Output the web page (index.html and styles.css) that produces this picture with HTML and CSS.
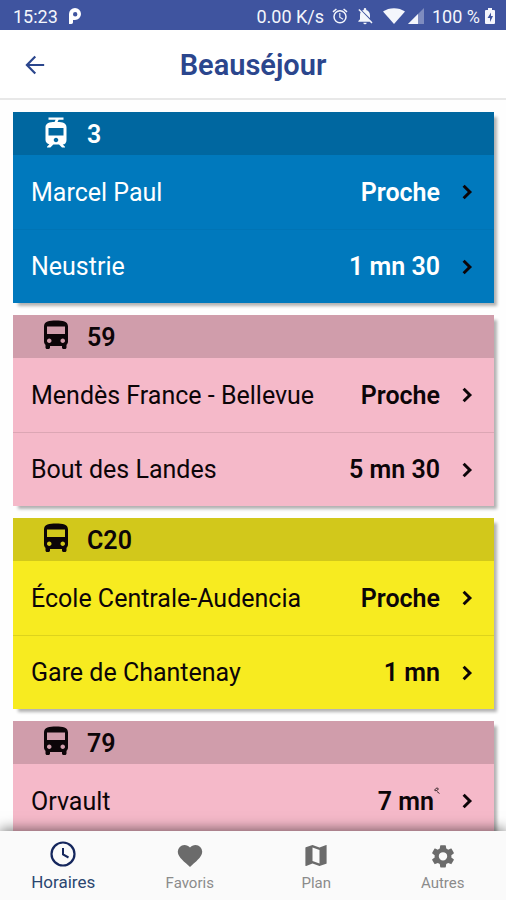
FILE: index.html
```html
<!DOCTYPE html>
<html lang="fr">
<head>
<meta charset="utf-8">
<meta name="viewport" content="width=device-width, initial-scale=1">
<title>Beauséjour</title>
<link rel="stylesheet" href="styles.css">
</head>
<body>
<svg class="defs" aria-hidden="true">
  <symbol id="bus" viewBox="0 0 24 24"><path fill-rule="evenodd" d="M4 16c0 .88.39 1.67 1 2.22V20c0 .55.45 1 1 1h1c.55 0 1-.45 1-1v-1h8v1c0 .55.45 1 1 1h1c.55 0 1-.45 1-1v-1.78c.61-.55 1-1.34 1-2.22V6c0-3.5-3.58-4-8-4s-8 .5-8 4v10zm3.500 1c-.83 0-1.500-.67-1.500-1.500S6.670 14 7.500 14s1.500.67 1.500 1.500S8.330 17 7.500 17zm9 0c-.83 0-1.500-.67-1.500-1.500s.67-1.500 1.500-1.500 1.500.67 1.500 1.500-.67 1.500-1.500 1.500zM18 11H6V6h12v5z"/></symbol>
  <symbol id="tram" viewBox="0 0 24 24"><path fill-rule="evenodd" d="M19 16.940V8.500c0-2.790-2.610-3.400-6.010-3.490L13.750 3.500H17V2H7v1.500h4.750l-.76 1.520C7.860 5.110 5 5.730 5 8.500v8.440c0 1.450 1.190 2.660 2.590 2.970L6 21.500v.5h2.230l2-2H14l2 2h2v-.5L16.500 20h-.08c1.690 0 2.580-1.370 2.580-3.060zM12 18.500c-.83 0-1.500-.67-1.500-1.500s.67-1.500 1.500-1.500 1.500.67 1.500 1.500-.67 1.500-1.500 1.500zM17 14H7V9h10v5z"/></symbol>
  <symbol id="chevron" viewBox="0 0 24 24"><path d="M8.200 16.500 12.700 12 8.200 7.500 10 5.700l6.300 6.300-6.300 6.300z"/></symbol>
</svg>
<div class="app">
  <div class="status">
    <span class="status-time">15:23</span>
    <svg class="status-p" viewBox="0 0 14 18"><path fill="#fff" fill-rule="evenodd" d="M1 17V7a6 6 0 1 1 6 6H5v2.500A2 2 0 0 1 3 17zM7.200 5a2.200 2.200 0 1 0 0 4.400 2.200 2.200 0 0 0 0-4.400z"/></svg>
    <span class="status-rate">0.00 K/s</span>
    <svg class="status-icon" viewBox="0 0 24 24"><path d="m22 5.720-4.600-3.860-1.290 1.530 4.600 3.860L22 5.720zM7.880 3.390 6.600 1.860 2 5.710l1.290 1.530 4.590-3.850zM12.500 8H11v6l4.750 2.850.75-1.230-4-2.370V8zM12 4a9 9 0 1 0 0 18 9 9 0 0 0 0-18zm0 16a7 7 0 1 1 0-14 7 7 0 0 1 0 14z"/></svg>
    <svg class="status-icon status-bell" viewBox="0 0 24 24"><path d="M20 18.690 7.840 6.140 5.270 3.490 4 4.760l2.800 2.800v.01c-.52.99-.8 2.160-.8 3.430v5l-2 2v1h13.730l2 2L21 19.720l-1-1.030zM12 22a2 2 0 0 0 2-2h-4a2 2 0 0 0 2 2zm6-7.320V11c0-3.080-1.640-5.640-4.500-6.320V4a1.500 1.500 0 0 0-3 0v.68c-.7.160-1.350.45-1.950.85L18 14.680z"/></svg>
    <svg class="status-wifi" viewBox="0 0 24 18"><path d="M1 4.500C7 0 17 0 23 4.500L12 17z"/></svg>
    <svg class="status-signal" viewBox="0 0 18 18"><path opacity=".35" d="M1 17 17 1v16z"/><path d="M1 17 11 7v10z"/></svg>
    <span>100 %</span>
    <svg class="status-battery" viewBox="0 0 12 18"><path fill-rule="evenodd" d="M4 1h4v2h2a1 1 0 0 1 1 1v12a1 1 0 0 1-1 1H2a1 1 0 0 1-1-1V4a1 1 0 0 1 1-1h2zm3 4.500L3.500 11H6v4l3-6H7z"/></svg>
  </div>
  <header class="header">
    <button class="back" type="button" aria-label="Retour">
      <svg viewBox="0 0 24 24"><path fill="none" stroke="currentColor" stroke-width="2.400" d="M22 12H3.500M12.300 2.800 3.200 12l9.100 9.200"/></svg>
    </button>
    <h1 class="title">Beauséjour</h1>
  </header>
  <main class="lines">
    <section class="card blue">
      <h2 class="line"><svg class="vehicle"><use href="#tram"/></svg>3</h2>
      <a class="row" href="#"><span>Marcel Paul</span><strong class="wait">Proche</strong><svg class="chevron"><use href="#chevron"/></svg></a>
      <a class="row" href="#"><span>Neustrie</span><strong class="wait">1 mn 30</strong><svg class="chevron"><use href="#chevron"/></svg></a>
    </section>
    <section class="card pink">
      <h2 class="line"><svg class="vehicle"><use href="#bus"/></svg>59</h2>
      <a class="row" href="#"><span>Mendès France - Bellevue</span><strong class="wait">Proche</strong><svg class="chevron"><use href="#chevron"/></svg></a>
      <a class="row" href="#"><span>Bout des Landes</span><strong class="wait">5 mn 30</strong><svg class="chevron"><use href="#chevron"/></svg></a>
    </section>
    <section class="card yellow">
      <h2 class="line"><svg class="vehicle"><use href="#bus"/></svg>C20</h2>
      <a class="row" href="#"><span>École Centrale-Audencia</span><strong class="wait">Proche</strong><svg class="chevron"><use href="#chevron"/></svg></a>
      <a class="row" href="#"><span>Gare de Chantenay</span><strong class="wait">1 mn</strong><svg class="chevron"><use href="#chevron"/></svg></a>
    </section>
    <section class="card pink">
      <h2 class="line"><svg class="vehicle"><use href="#bus"/></svg>79</h2>
      <a class="row" href="#"><span>Orvault</span><strong class="wait">7 mn<svg class="live" viewBox="0 0 6 8"><path fill="none" stroke="currentColor" stroke-width=".8" d="M.5 3 3 .8 4.500 2 2 4zM3 4.500l2.500 2"/></svg></strong><svg class="chevron"><use href="#chevron"/></svg></a>
    </section>
  </main>
  <nav class="tabs">
    <a class="tab active" href="#"><svg viewBox="0 0 28 28"><circle cx="14" cy="14" r="11.500" fill="none" stroke="currentColor" stroke-width="2.200"/><path fill="none" stroke="currentColor" stroke-width="2" d="M14 8v6.500l5.500 3"/></svg>Horaires</a>
    <a class="tab" href="#"><svg viewBox="0 0 28 28"><path d="m14 27-1.600-1.500C5.500 19.600 1.800 16.200 1.800 11.600A6.600 6.600 0 0 1 8.500 5C10.600 5 12.700 6 14 7.600 15.300 6 17.400 5 19.500 5a6.600 6.600 0 0 1 6.700 6.600c0 4.600-3.700 8-10.600 13.900z"/></svg>Favoris</a>
    <a class="tab" href="#"><svg viewBox="0 0 28 28"><path fill-rule="evenodd" d="m24.500 5-.3.100L17.500 7.500l-7-2.500-6.700 2.200a.6.6 0 0 0-.4.600v17.600c0 .4.300.6.600.6l.2-.1L10.500 23.500l7 2.500 6.700-2.200c.2-.1.400-.3.400-.6V5.600a.6.600 0 0 0-.1-.6zM17.500 23.600l-7-2.500V7.400l7 2.500z"/></svg>Plan</a>
    <a class="tab" href="#"><svg viewBox="0 -2 24 24"><path fill-rule="evenodd" d="M19.140 12.940c.04-.3.060-.61.060-.94s-.02-.64-.07-.94l2.030-1.580c.18-.14.230-.41.120-.61l-1.920-3.320c-.12-.22-.37-.29-.59-.22l-2.390.96c-.5-.38-1.030-.7-1.620-.94l-.36-2.540c-.04-.24-.24-.41-.48-.41h-3.840c-.24 0-.43.170-.47.410l-.36 2.540c-.59.240-1.130.57-1.620.94l-2.390-.96c-.22-.08-.47 0-.59.220L2.740 8.870c-.12.210-.08.470.12.610l2.030 1.580c-.05.300-.09.630-.09.940s.02.640.07.940l-2.030 1.580c-.18.140-.23.410-.12.610l1.920 3.320c.12.220.37.290.59.220l2.390-.96c.5.380 1.030.7 1.620.94l.36 2.540c.05.240.24.410.48.410h3.840c.24 0 .44-.17.47-.41l.36-2.540c.59-.24 1.130-.56 1.620-.94l2.390.96c.22.080.47 0 .59-.22l1.920-3.320c.12-.22.070-.47-.12-.61l-2.010-1.580zM12 15.600a3.600 3.600 0 1 1 0-7.200 3.600 3.600 0 0 1 0 7.200z"/></svg>Autres</a>
  </nav>
</div>
</body>
</html>
```
FILE: styles.css
```css
* {
  box-sizing: border-box;
}

body {
  margin: 0;
  font-family: Roboto, "Liberation Sans", sans-serif;
  background: #fefefe;
}

svg {
  display: block;
  flex: none;
  fill: currentColor;
}

a {
  color: inherit;
  text-decoration: none;
}

.defs {
  position: absolute;
  width: 0;
  height: 0;
}

.app {
  display: flex;
  flex-direction: column;
  height: 100vh;
}

.status {
  display: flex;
  flex: none;
  align-items: center;
  height: 30px;
  padding: 2px 10px 0 13px;
  background: #3f549f;
  color: #f4f6fc;
  font-size: 18px;
}

.status-p {
  width: 14px;
  height: 18px;
  margin-left: 10px;
}

.status-rate {
  margin-left: auto;
}

.status-icon {
  width: 18px;
  height: 18px;
  margin-left: 7px;
}

.status-bell {
  width: 20px;
  height: 20px;
  margin-left: 6px;
}

.status-wifi {
  width: 24px;
  height: 18px;
  margin-left: 7px;
}

.status-signal {
  width: 18px;
  height: 18px;
  margin: 0 7px 0 1px;
}

.status-battery {
  width: 12px;
  height: 18px;
  margin-left: 4px;
}

.header {
  display: grid;
  flex: none;
  grid-template-columns: 48px 1fr 48px;
  align-items: center;
  height: 70px;
  padding: 2px 12px 0;
  border-bottom: 2px solid #e8e8e8;
  background: #fff;
  color: #2b468d;
}

.back {
  padding: 12px;
  border: 0;
  background: none;
  color: inherit;
}

.back svg {
  width: 22px;
  height: 22px;
}

.title {
  margin: 0;
  font-size: 29px;
  font-weight: 600;
  text-align: center;
}

.lines {
  display: flex;
  flex: 1;
  flex-direction: column;
  gap: 12px;
  min-height: 0;
  padding: 12px 12px 12px 13px;
  overflow: hidden;
}

.card {
  flex: none;
  box-shadow: 4px 4px 3px -1px rgba(0, 0, 0, 0.3);
  color: #0c0508;
}

.blue {
  background: #0079bd;
  color: #fff;
}

.pink {
  background: #f5b9c9;
}

.yellow {
  background: #f7eb20;
}

.line {
  display: flex;
  align-items: center;
  gap: 13px;
  height: 43px;
  margin: 0;
  padding: 2px 25px 0;
  background: rgba(0, 0, 0, 0.15);
  font-size: 25px;
  font-weight: 600;
}

.vehicle {
  width: 36px;
  height: 37px;
  margin-top: -4px;
}

.row {
  display: flex;
  align-items: center;
  height: 74px;
  padding: 0 13px 0 18px;
  font-size: 25px;
}

.row + .row {
  border-top: 1px solid rgba(0, 0, 0, 0.1);
}

.blue .row + .row {
  border-color: rgba(0, 0, 0, 0.04);
}

.wait {
  display: flex;
  margin-left: auto;
  font-weight: 600;
}

.live {
  width: 6px;
  height: 8px;
}

.chevron {
  width: 28px;
  height: 28px;
  margin-left: 13px;
  color: #0c0508;
}

.tabs {
  position: relative;
  display: grid;
  flex: none;
  grid-template-columns: repeat(4, 1fr);
  height: 69px;
  background: #fafafa;
  box-shadow: 0 -2px 12px rgba(0, 0, 0, 0.5);
}

.tab {
  display: flex;
  flex-direction: column;
  align-items: center;
  gap: 6px;
  padding-top: 9px;
  color: #8b8b8b;
  font-size: 15px;
}

.tab svg {
  width: 28px;
  height: 28px;
  color: #6b6b6b;
}

.active {
  gap: 4px;
  color: #2a4670;
  font-size: 17px;
}

.active svg {
  color: #14265c;
}
```
